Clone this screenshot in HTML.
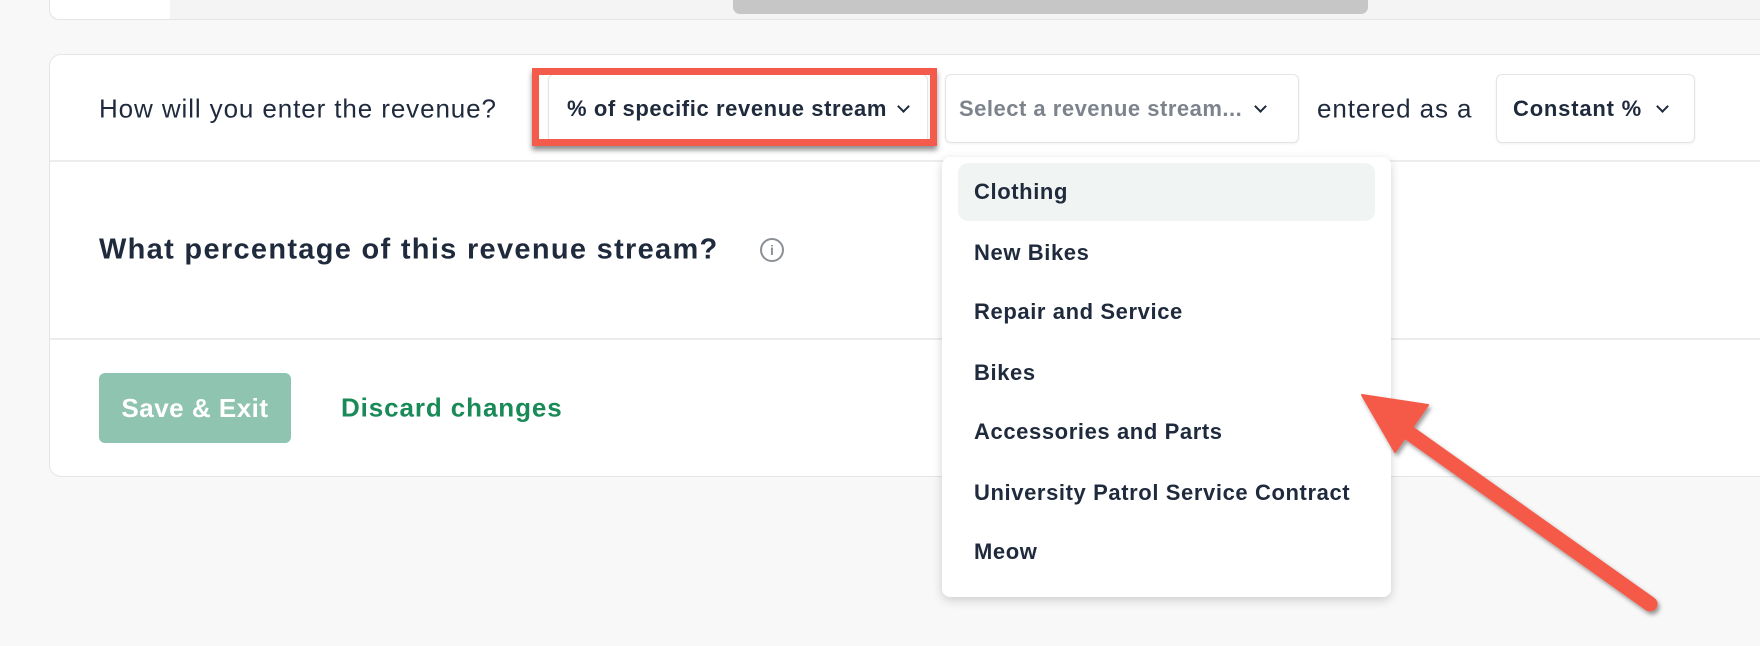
<!DOCTYPE html>
<html><head><meta charset="utf-8"><style>
*{box-sizing:border-box;margin:0;padding:0}
body{width:1760px;height:646px;background:#f7f8f7;font-family:"Liberation Sans",sans-serif;color:#1f2a3c;position:relative;overflow:hidden}
.abs{position:absolute}
.top{left:49px;top:-10px;width:1800px;height:30px;background:#f3f4f3;border:1px solid #e4e6e4;border-radius:10px}
.topw{left:50px;top:-10px;width:120px;height:29px;background:#fff;border-radius:10px 0 0 10px}
.thumb{left:733px;top:0;width:635px;height:14px;background:#c6c6c6;border-radius:0 0 7px 7px}
.card{left:49px;top:54px;width:1800px;height:423px;background:#fff;border:1px solid #e4e6e4;border-radius:12px}
.hr{left:50px;width:1800px;height:2px;background:#eceeed}
.t{white-space:nowrap;transform:translateY(-50%)}
.dd{background:#fff;border:1px solid #e2e4e6;border-radius:6px;box-shadow:0 1px 2px rgba(0,0,0,.06)}
.chev{display:inline-block;width:9px;height:9px;border-right:2.5px solid #1f2a3c;border-bottom:2.5px solid #1f2a3c;transform:rotate(45deg);margin-left:12px;position:relative;top:-5px}
.menu{left:942px;top:157px;width:449px;height:440px;background:#fff;border-radius:8px;box-shadow:0 3px 10px rgba(0,0,0,.18)}
.it{position:absolute;left:974px;font-size:22px;letter-spacing:.6px;font-weight:bold;white-space:nowrap;transform:translateY(-50%)}
.reg{font-size:26px;letter-spacing:.9px}
</style></head><body>
<div class="abs top"></div><div class="abs topw"></div><div class="abs thumb"></div>
<div class="abs card"></div>
<div class="abs hr" style="top:160px"></div>
<div class="abs hr" style="top:338px"></div>
<div class="abs t reg" style="left:99px;top:109px">How will you enter the revenue?</div>
<div class="abs dd" style="left:548px;top:74px;width:380px;height:69px"></div>
<div class="abs t" style="left:567px;top:109px;font-size:22px;letter-spacing:.6px;font-weight:bold">% of specific revenue stream<span class="chev"></span></div>
<div class="abs" style="left:532px;top:68px;width:405px;height:78px;border:7px solid #f45b4b;box-shadow:0 4px 5px rgba(0,0,0,.45)"></div>
<div class="abs dd" style="left:945px;top:74px;width:354px;height:69px"></div>
<div class="abs t" style="left:959px;top:109px;font-size:22px;letter-spacing:.5px;color:#7d838c;font-weight:bold">Select a revenue stream...<span class="chev" style="margin-left:14px"></span></div>
<div class="abs t reg" style="left:1317px;top:109px">entered as a</div>
<div class="abs dd" style="left:1496px;top:74px;width:199px;height:69px"></div>
<div class="abs t" style="left:1513px;top:109px;font-size:22px;letter-spacing:.8px;font-weight:bold">Constant %<span class="chev" style="margin-left:16px"></span></div>
<div class="abs t" style="left:99px;top:250px;font-size:29px;letter-spacing:1.3px;font-weight:bold">What percentage of this revenue stream?</div>
<div class="abs" style="left:760px;top:238px;width:24px;height:24px;border:2px solid #8a9096;border-radius:50%;color:#8a9096;font-size:14px;font-weight:bold;text-align:center;line-height:20px">i</div>
<div class="abs" style="left:99px;top:373px;width:192px;height:70px;background:#8fc4b1;border-radius:6px;color:#fff;font-size:26px;letter-spacing:.5px;font-weight:bold;text-align:center;line-height:70px">Save &amp; Exit</div>
<div class="abs t" style="left:341px;top:408px;font-size:26px;letter-spacing:.9px;font-weight:bold;color:#1a8a58">Discard changes</div>
<div class="abs menu"></div>
<div class="abs" style="left:958px;top:163px;width:417px;height:58px;background:#f0f5f3;border-radius:10px"></div>
<div class="it" style="top:192px">Clothing</div>
<div class="it" style="top:253px">New Bikes</div>
<div class="it" style="top:312px">Repair and Service</div>
<div class="it" style="top:373px">Bikes</div>
<div class="it" style="top:432px">Accessories and Parts</div>
<div class="it" style="top:493px">University Patrol Service Contract</div>
<div class="it" style="top:552px">Meow</div>
<svg class="abs" style="left:0;top:0" width="1760" height="646">
<defs><filter id="s" x="-20%" y="-20%" width="140%" height="140%"><feDropShadow dx="2" dy="3" stdDeviation="2" flood-color="#000" flood-opacity=".4"/></filter></defs>
<g filter="url(#s)" fill="#f55a4a" stroke="#f55a4a">
<line x1="1650" y1="604" x2="1388" y2="418" stroke-width="15" stroke-linecap="round"/>
<polygon points="1362,395 1428,405 1395,452" stroke-width="2" stroke-linejoin="round"/>
</g>
</svg>
</body></html>
